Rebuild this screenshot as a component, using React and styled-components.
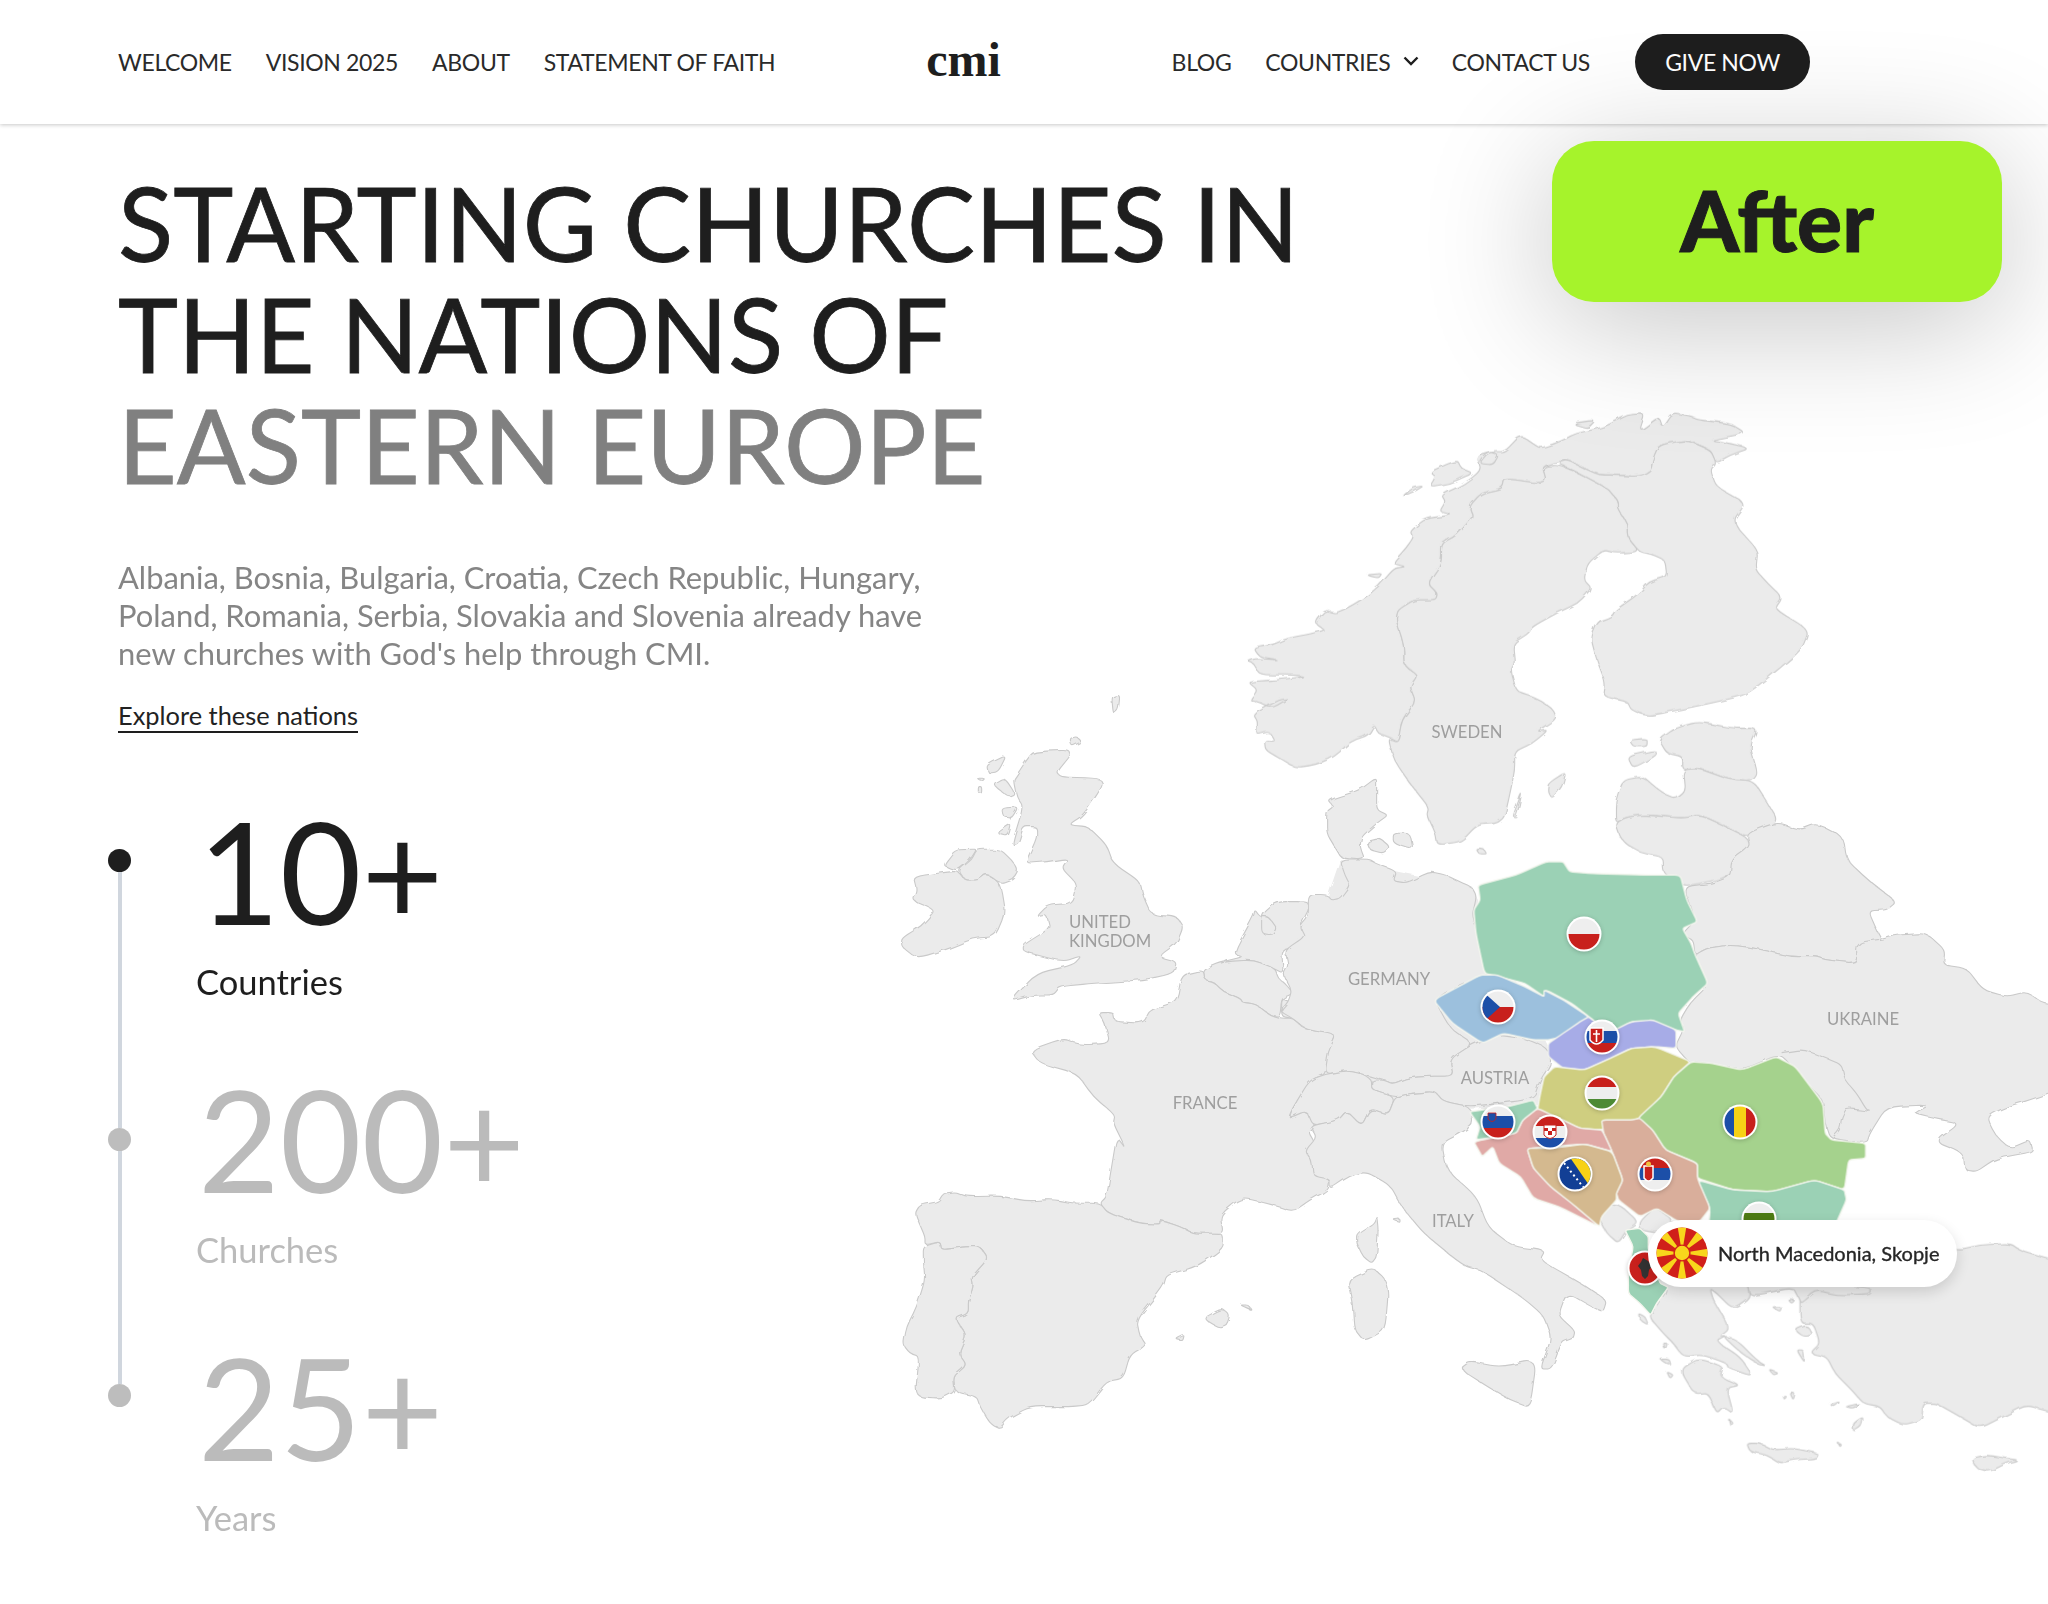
import styled, { createGlobalStyle } from 'styled-components';

const GlobalStyle = createGlobalStyle`
  html, body {
    margin: 0;
    background: #fff;
    font-family: Lato, "Open Sans", sans-serif;
    color: #1e1e1e;
  }
`;

const leftLinks = ['WELCOME', 'VISION 2025', 'ABOUT', 'STATEMENT OF FAITH'];
const stats = [
  { value: '10+', label: 'Countries', active: true },
  { value: '200+', label: 'Churches' },
  { value: '25+', label: 'Years' },
];

// Map pieces were traced region by region, each <g> has its own scale
const NORTH = 'translate(1220 400) scale(0.3954 0.3333)';
const WEST = 'translate(880 690) scale(0.3333)';
const IBERIA = 'translate(880 1090) scale(0.3333)';
const EAST = 'translate(1640 840) scale(0.3333)';
const SOUTH = 'translate(1560 1200) scale(0.3333)';
const BALKANS = 'translate(1380 840) scale(0.426 0.3333)';
const CENTRAL = 'translate(1250 860) scale(0.3333 0.3827)';

// rounds the corners of a traced polygon so coasts don't look cut with scissors
function smooth(d, r = 0.32) {
  const pts = d.match(/-?\d+(\.\d+)?,-?\d+(\.\d+)?/g).map((p) => p.split(',').map(Number));
  const closed = /Z\s*$/.test(d);
  const lerp = (a, b, t) => [a[0] + (b[0] - a[0]) * t, a[1] + (b[1] - a[1]) * t];
  const fmt = (p) => `${p[0].toFixed(1)},${p[1].toFixed(1)}`;
  const n = pts.length;
  let out = '';
  pts.forEach((v, i) => {
    const prev = pts[(i - 1 + n) % n];
    const next = pts[(i + 1) % n];
    if (!closed && i === 0) {
      out += `M${fmt(v)} `;
      return;
    }
    if (!closed && i === n - 1) {
      out += `L${fmt(v)} `;
      return;
    }
    const a = lerp(v, prev, r);
    const b = lerp(v, next, r);
    out += `${i === 0 ? 'M' : 'L'}${fmt(a)} Q${fmt(v)} ${fmt(b)} `;
  });
  return closed ? `${out}Z` : out;
}

const northLand = [
  'M390,975 L375,1005 L330,1025 L290,1070 L240,1095 L190,1103 L150,1075 L115,1050 L112,1020 L140,1025 L125,995 L92,1005 L95,965 L85,945 L110,925 L150,900 L175,895 L130,925 L90,905 L75,900 L95,870 L70,845 L140,840 L215,830 L190,825 L100,825 L85,790 L70,785 L90,775 L150,780 L100,770 L85,745 L130,735 L170,715 L235,700 L265,690 L240,670 L265,630 L290,640 L320,625 L370,590 L400,560 L440,505 L470,500 L435,490 L470,445 L490,410 L480,395 L520,355 L590,345 L555,335 L570,305 L560,285 L620,250 L660,210 L650,170 L690,155 L720,155 L760,105 L790,130 L810,145 L860,125 L900,100 L960,85 L990,70 L1030,45 L1075,40 L1060,95 L1110,50 L1120,85 L1145,40 L1190,50 L1210,60 L1290,70 L1330,100 L1240,120 L1270,125 L1340,145 L1290,165 L1255,190 L1240,150 L1180,120 L1110,135 L1095,175 L1090,210 L1060,230 L1000,225 L960,225 L920,205 L880,180 L855,185 L815,200 L825,240 L805,250 L720,235 L715,265 L660,280 L630,320 L640,350 L600,405 L560,430 L560,490 L525,550 L550,580 L545,600 L490,600 L450,630 L445,660 L465,735 L465,795 L500,825 L480,860 L495,905 L460,960 L450,1025 L425,1010 L400,1000 Z',
  'M425,1015 L450,1025 L460,960 L495,905 L480,860 L500,825 L465,795 L465,735 L445,660 L450,630 L490,600 L545,600 L550,580 L525,550 L560,490 L560,430 L600,405 L640,350 L630,320 L660,280 L715,265 L720,235 L805,250 L825,240 L815,200 L855,195 L900,215 L980,265 L1005,300 L1005,325 L1030,370 L1030,410 L1060,455 L1000,460 L970,450 L930,490 L920,540 L940,565 L905,610 L850,640 L790,680 L780,700 L740,730 L745,790 L735,810 L750,875 L800,895 L840,925 L852,955 L800,995 L830,990 L790,1030 L745,1055 L745,1110 L735,1170 L720,1250 L700,1270 L650,1275 L610,1325 L550,1335 L545,1300 L525,1250 L530,1225 L480,1150 L440,1080 Z',
  'M1060,455 L1030,410 L1030,370 L1005,325 L1005,300 L980,265 L900,215 L855,190 L880,180 L920,205 L960,225 L1000,225 L1060,230 L1090,210 L1095,175 L1110,135 L1180,120 L1240,150 L1255,190 L1240,210 L1255,260 L1330,310 L1295,365 L1360,450 L1355,510 L1385,550 L1420,590 L1400,625 L1490,690 L1470,750 L1400,820 L1330,885 L1240,910 L1140,935 L1080,948 L1040,930 L1030,905 L970,890 L975,850 L950,770 L938,715 L955,665 L990,650 L1000,630 L1060,580 L1085,545 L1130,530 L1125,480 L1090,462 Z',
  'M460,290 L490,262 L515,258 L490,275 Z',
  'M530,260 L545,230 L530,215 L600,180 L610,205 L640,220 L580,250 Z',
  'M890,70 L950,60 L930,85 Z',
  'M655,190 L680,155 L705,165 L690,195 Z',
  'M370,525 L410,520 L400,535 Z',
  'M830,1150 L875,1115 L865,1160 L840,1195 L828,1175 Z',
  'M740,1250 L765,1170 L750,1250 Z',
  'M645,1345 L665,1345 L675,1362 L655,1362 Z',
  'M1035,1020 L1080,1015 L1080,1040 L1045,1040 Z',
  'M1030,1070 L1100,1050 L1105,1065 L1045,1105 Z',
  'M1110,1020 L1150,985 L1210,965 L1300,985 L1360,985 L1340,1040 L1360,1120 L1345,1145 L1290,1140 L1210,1105 L1170,1110 L1170,1070 L1130,1060 Z',
  'M1000,1270 L1000,1200 L1020,1140 L1070,1130 L1120,1180 L1150,1195 L1175,1170 L1170,1110 L1210,1105 L1290,1140 L1350,1145 L1380,1200 L1410,1260 L1380,1290 L1330,1310 L1280,1280 L1215,1245 L1170,1255 L1080,1245 L1030,1250 Z',
  'M1000,1270 L1030,1250 L1080,1245 L1170,1255 L1215,1245 L1280,1280 L1330,1310 L1345,1345 L1290,1431 L1171,1461 L1121,1419 L1121,1371 L1062,1359 L1015,1320 Z',
];

const westLand = [
  'M440,510 L470,445 L470,410 L430,410 L415,460 L395,465 L430,350 L410,320 L400,270 L410,255 L440,210 L460,185 L585,180 L520,260 L660,265 L670,285 L610,375 L565,405 L625,410 L680,465 L700,520 L780,575 L790,620 L815,675 L890,680 L910,710 L890,760 L835,800 L890,815 L880,850 L790,870 L640,880 L540,890 L520,915 L460,915 L390,935 L470,850 L580,825 L605,797 L550,815 L430,785 L430,765 L510,715 L500,675 L470,680 L505,645 L575,640 L590,580 L545,535 L565,505 L500,515 L445,520 Z',
  'M320,225 L380,195 L355,245 L325,250 Z',
  'M340,285 L375,265 L405,310 L385,320 Z',
  'M365,355 L415,350 L395,385 L370,380 Z',
  'M350,430 L395,400 L385,440 Z',
  'M290,265 L315,265 L305,275 Z',
  'M295,290 L305,290 L305,310 L295,310 Z',
  'M570,145 L590,140 L605,155 L575,170 Z',
  'M695,20 L720,15 L715,60 L700,72 Z',
  'M100,560 L210,545 L235,545 L255,570 L295,570 L320,550 L360,580 L375,670 L345,740 L280,745 L210,775 L110,805 L65,770 L65,745 L120,710 L140,690 L165,660 L95,630 L110,600 Z',
  'M190,525 L225,480 L270,478 L290,478 L270,510 L235,540 L210,535 Z',
  'M235,540 L275,510 L290,478 L360,478 L395,510 L415,540 L400,565 L360,580 L320,550 L295,570 L255,570 Z',
  'M1490,262 L1440,300 L1345,330 L1360,350 L1340,365 L1340,430 L1370,480 L1385,505 L1455,510 L1440,470 L1445,440 L1490,400 L1525,375 L1490,360 L1490,300 Z',
  'M1460,455 L1500,445 L1530,470 L1510,490 L1470,480 Z',
  'M1540,430 L1590,430 L1600,480 L1540,460 Z',
  'M1125,660 L1120,680 L1060,790 L1090,800 L1030,815 L1060,825 L1120,810 L1180,835 L1210,850 L1205,780 L1260,770 L1280,720 L1260,710 L1290,650 L1280,635 L1190,635 L1145,675 L1145,730 L1175,735 L1190,715 L1165,680 L1140,680 Z',
  'M970,840 L1030,815 L1120,810 L1185,835 L1195,865 L1215,880 L1240,910 L1205,925 L1200,980 L1170,975 L1130,945 L1090,940 L1080,925 L1030,905 L1000,875 L975,870 Z',
  'M1205,925 L1240,940 L1250,960 L1240,985 L1205,980 Z',
  'M970,840 L975,870 L1000,875 L1030,905 L1080,925 L1090,940 L1130,945 L1170,975 L1205,985 L1240,985 L1270,1015 L1370,1030 L1350,1080 L1335,1155 L1300,1165 L1240,1250 L1225,1285 L1250,1260 L1285,1270 L1305,1305 L1285,1325 L1305,1360 L1280,1380 L1305,1410 L1295,1445 L1350,1470 L1345,1500 L1290,1530 L1240,1565 L1180,1545 L1085,1522 L1020,1575 L1030,1630 L985,1630 L940,1630 L900,1610 L840,1590 L840,1603 L780,1600 L685,1570 L660,1540 L680,1520 L695,1430 L710,1340 L740,1380 L700,1300 L705,1275 L640,1220 L590,1150 L480,1120 L450,1080 L550,1045 L600,1065 L690,1060 L675,1000 L655,968 L700,968 L705,995 L790,1000 L810,960 L890,935 L905,855 Z',
];

const iberiaLand = [
  'M660,340 L685,370 L780,400 L840,403 L840,390 L900,410 L940,430 L1030,430 L1030,475 L950,530 L860,555 L850,590 L770,690 L780,740 L800,765 L750,795 L730,865 L680,875 L625,945 L570,950 L450,950 L385,985 L360,1015 L330,1000 L300,950 L290,920 L225,905 L220,860 L260,825 L235,790 L260,735 L225,685 L265,670 L265,630 L280,590 L275,560 L325,505 L300,470 L260,470 L185,480 L180,455 L135,465 L135,440 L120,405 L105,370 L120,345 L175,335 L190,310 L225,305 L260,320 L360,318 L440,333 L520,328 L580,340 Z',
  'M130,470 L180,455 L185,480 L260,470 L300,470 L325,505 L275,560 L280,590 L265,630 L265,670 L225,685 L260,735 L235,790 L260,825 L220,860 L225,905 L185,925 L105,920 L118,800 L90,790 L70,765 L80,710 L110,650 L135,570 L130,510 Z',
  'M970,685 L1025,655 L1050,675 L1040,705 L1015,712 Z',
  'M1080,645 L1105,645 L1115,660 Z',
  'M885,745 L910,732 L905,750 Z',
  'M1430,430 L1480,400 L1490,375 L1495,420 L1490,500 L1475,520 L1450,500 L1430,460 Z',
  'M1405,570 L1480,535 L1515,565 L1525,610 L1515,720 L1470,745 L1450,750 L1425,720 L1420,640 Z',
];

const centralBase = 'M270,0 L665,70 L900,500 L870,640 L660,650 L160,700 L115,400 Z';

const centralLand = [
  'M270,0 L285,40 L300,65 L270,100 L245,105 L230,90 L175,90 L175,150 L150,175 L165,200 L105,235 L115,275 L100,300 L125,340 L115,370 L90,395 L130,415 L165,440 L260,455 L235,500 L225,560 L290,550 L340,560 L400,575 L430,585 L470,570 L530,565 L610,565 L600,520 L670,480 L600,440 L550,360 L695,305 L725,295 L720,260 L665,150 L680,95 L665,70 L625,55 L590,40 L540,30 L470,60 L430,55 L440,30 L380,10 L360,0 Z',
  'M225,560 L290,550 L340,560 L365,575 L365,600 L435,620 L415,665 L360,650 L335,695 L290,655 L265,680 L190,695 L170,655 L115,675 L140,630 L180,575 Z',
  'M610,565 L530,565 L470,570 L430,585 L400,575 L365,575 L365,600 L435,620 L480,610 L555,605 L580,630 L660,645 L850,625 L870,575 L905,530 L890,490 L820,465 L745,455 L670,480 L600,520 Z',
  'M180,695 L265,680 L290,655 L335,695 L360,650 L415,665 L435,620 L480,610 L555,605 L580,630 L660,645 L670,690 L640,710 L575,740 L590,810 L680,880 L715,960 L790,1010 L885,1020 L870,1045 L1000,1110 L1070,1150 L1060,1180 L1030,1170 L950,1130 L925,1190 L975,1230 L970,1250 L935,1260 L905,1330 L870,1330 L905,1250 L880,1190 L820,1145 L700,1075 L640,1060 L520,975 L450,900 L420,850 L350,815 L300,825 L240,860 L240,835 L190,825 L185,785 L165,760 L200,725 Z',
  'M630,1330 L660,1310 L750,1325 L860,1305 L840,1430 L780,1410 L720,1380 Z',
  'M430,940 L450,938 L450,948 Z',
];

const eastLand = [
  'M130,140 L215,130 L270,110 L275,60 L330,20 L320,-20 L411,-54 L480,-30 L530,-50 L610,-10 L620,60 L690,125 L770,185 L740,210 L685,212 L710,270 L725,298 L660,310 L650,370 L560,360 L530,350 L450,350 L350,325 L270,315 L200,325 L165,345 L160,300 L125,285 L165,240 Z',
  'M165,345 L200,325 L270,315 L350,325 L450,350 L530,350 L560,360 L650,370 L650,320 L665,305 L725,298 L770,285 L860,280 L915,330 L910,375 L980,385 L1030,450 L1100,470 L1160,455 L1210,490 L1320,500 L1320,720 L1224,760 L1170,780 L1100,800 L1040,830 L1070,890 L1110,925 L1170,900 L1180,935 L1100,950 L1060,960 L1010,995 L975,990 L970,940 L885,905 L960,850 L880,835 L820,820 L870,795 L740,800 L690,880 L680,910 L570,895 L555,850 L550,780 L480,710 L430,650 L400,650 L305,690 L170,665 L150,670 L105,620 L130,570 L120,540 L150,490 L205,435 L170,375 Z',
];

const moldovaBorder =
  'M425,638 L490,628 L560,655 L605,675 L615,720 L650,760 L680,810 L695,815 L620,805 L605,830 L600,870 L575,895';

const southLand = [
  'M720,370 L720,250 L900,100 L1190,150 L1260,135 L1350,130 L1380,150 L1464,175 L1580,200 L1580,660 L1464,635 L1400,615 L1330,650 L1260,685 L1200,650 L1130,610 L1090,610 L1085,660 L1030,675 L980,650 L960,620 L910,610 L870,565 L825,520 L800,470 L750,460 L780,430 L760,370 Z',
  'M285,260 L300,220 L560,240 L570,290 L530,320 L510,320 L470,280 L450,265 L460,300 L510,385 L480,410 L500,410 L470,425 L540,470 L580,530 L505,505 L500,490 L430,465 L370,470 L340,430 L315,405 L275,360 L270,345 L325,265 Z',
  'M560,245 L930,260 L930,282 L830,285 L770,270 L725,310 L720,300 L700,262 L570,290 Z',
  'M360,510 L415,475 L490,500 L480,530 L540,555 L500,565 L520,640 L490,620 L470,640 L445,580 L405,585 Z',
  'M490,410 L530,420 L590,480 L615,495 L590,490 L545,460 Z',
  'M560,730 L600,730 L640,750 L700,745 L775,760 L770,775 L700,780 L660,790 L620,765 L570,755 Z',
  'M1235,775 L1280,765 L1340,775 L1375,780 L1340,790 L1290,815 L1250,805 Z',
  'M705,390 L740,375 L760,405 L730,410 Z',
  'M710,450 L730,450 L735,490 Z',
  'M880,670 L910,650 L905,680 L880,695 Z',
  'M810,615 L840,605 L825,620 Z',
  'M855,620 L900,610 L880,625 Z',
  'M235,340 L255,350 L265,375 L240,360 Z',
  'M295,475 L325,475 L330,495 Z',
  'M320,515 L340,525 L330,535 Z',
  'M310,430 L322,430 L315,450 Z',
  'M690,580 L705,580 L700,600 Z',
  'M670,585 L680,590 L672,598 Z',
  'M635,320 L665,320 L660,335 Z',
  'M685,300 L705,300 L695,310 Z',
  'M505,655 L520,670 L510,675 Z',
  'M830,725 L845,735 L840,740 Z',
  'M630,510 L655,520 L640,525 Z',
  'M115,50 L135,10 L180,15 L235,65 L200,90 L175,130 L140,100 Z',
  'M240,65 L285,20 L340,60 L300,100 L240,90 Z',
  'M300,100 L340,60 L420,120 L300,230 Z',
];

const albania =
  'M195,90 L240,85 L265,110 L265,150 L300,250 L325,262 L290,310 L272,345 L240,310 L205,280 L205,210 L220,140 Z';

const nations = [
  { color: '#9bd1b5', d: 'M230,135 L320,105 L390,65 L430,65 L445,95 L490,100 L620,105 L705,105 L720,180 L745,245 L710,265 L730,310 L740,345 L770,430 L735,470 L700,520 L715,575 L695,570 L640,545 L590,545 L540,580 L490,530 L450,490 L390,450 L385,470 L340,430 L280,410 L245,400 L225,280 L220,210 L235,180 Z' },
  { color: '#9cc0dd', d: 'M125,480 L235,405 L275,405 L340,440 L385,470 L385,450 L430,480 L490,530 L470,550 L430,590 L395,600 L360,600 L290,580 L240,610 L170,550 Z' },
  { color: '#a7ace7', d: 'M395,610 L430,580 L470,545 L490,530 L535,580 L590,545 L640,540 L695,570 L695,625 L645,620 L590,625 L540,655 L480,690 L430,685 L395,650 Z' },
  { color: '#cfce80', d: 'M410,680 L480,690 L540,655 L590,625 L645,620 L730,665 L690,710 L660,770 L610,835 L520,870 L470,865 L420,835 L370,810 L375,770 L385,710 Z' },
  { color: '#a5d28d', d: 'M730,665 L780,670 L850,690 L930,650 L975,680 L1040,790 L1045,880 L1060,900 L1140,910 L1140,955 L1100,960 L1090,1050 L1020,1020 L920,1055 L830,1050 L745,1015 L745,970 L670,930 L640,870 L605,835 L660,770 L690,710 Z' },
  { color: '#9bd1b5', d: 'M745,1020 L830,1050 L920,1055 L1020,1020 L1090,1050 L1095,1080 L1060,1180 L770,1180 L775,1105 Z' },
  { color: '#d9ae9b', d: 'M520,840 L590,840 L610,835 L640,870 L670,930 L745,970 L745,1015 L775,1105 L750,1145 L700,1145 L650,1105 L610,1130 L560,1080 L555,1060 L570,1020 L545,935 L525,880 Z' },
  { color: '#e0a9a6', d: 'M220,905 L320,880 L335,840 L370,805 L420,835 L470,865 L520,870 L525,880 L545,935 L480,912 L345,925 L360,985 L420,1050 L515,1160 L420,1100 L360,1075 L330,1010 L280,970 L265,920 L240,950 Z' },
  { color: '#d4b98f', d: 'M345,925 L400,925 L480,912 L545,935 L570,1020 L555,1060 L555,1080 L520,1130 L515,1160 L450,1090 L400,1040 L360,985 Z' },
  { color: '#9bd1b5', d: 'M210,815 L240,810 L300,800 L360,780 L370,805 L335,840 L320,880 L225,900 L235,860 Z' },
];

const labels = [
  { x: 1467, y: 738, text: 'SWEDEN' },
  { x: 1069, y: 928, text: 'UNITED', $start: true },
  { x: 1069, y: 947, text: 'KINGDOM', $start: true },
  { x: 1389, y: 985, text: 'GERMANY' },
  { x: 1205, y: 1109, text: 'FRANCE' },
  { x: 1495, y: 1084, text: 'AUSTRIA' },
  { x: 1453, y: 1227, text: 'ITALY' },
  { x: 1863, y: 1025, text: 'UKRAINE' },
];

const RED = '#c8201c';
const BLUE = '#1c4fa8';
const WHITE = '#eeeeee';

function StripeRows({ colors }) {
  const h = 36 / colors.length;
  return colors.map((c, i) => (
    <rect key={c + i} x="-18" y={-18 + i * h} width="36" height={h} fill={c} />
  ));
}

function FlagArt({ name }) {
  if (name === 'poland') return <StripeRows colors={[WHITE, RED]} />;
  if (name === 'hungary') return <StripeRows colors={[RED, WHITE, '#4d8a34']} />;
  if (name === 'bulgaria') return <StripeRows colors={[WHITE, '#4d7a14', RED]} />;
  if (name === 'slovenia') {
    return (
      <>
        <StripeRows colors={[WHITE, BLUE, RED]} />
        <path d="M-10,-9 H-2 V-3 Q-6,2 -10,-3 Z" fill={BLUE} stroke={RED} strokeWidth="0.8" />
      </>
    );
  }
  if (name === 'romania') {
    return (
      <>
        <rect x="-18" y="-18" width="12" height="36" fill={BLUE} />
        <rect x="-6" y="-18" width="12" height="36" fill="#f7d116" />
        <rect x="6" y="-18" width="12" height="36" fill={RED} />
      </>
    );
  }
  if (name === 'czech') {
    return (
      <>
        <StripeRows colors={[WHITE, RED]} />
        <path d="M-18,-18 L2,0 L-18,18 Z" fill="#1c4fa8" />
      </>
    );
  }
  if (name === 'slovakia') {
    return (
      <>
        <StripeRows colors={[WHITE, BLUE, RED]} />
        <path d="M-12,-9 H1 V3 Q-5.5,11 -12,3 Z" fill={RED} stroke="#fff" strokeWidth="1.5" />
        <path d="M-5.5,-7 V5 M-9,-3 H-2" stroke="#fff" strokeWidth="1.6" />
      </>
    );
  }
  if (name === 'croatia') {
    return (
      <>
        <StripeRows colors={[RED, WHITE, BLUE]} />
        <path d="M-6,-7 H6 V3 Q0,10 -6,3 Z" fill="#fff" stroke={RED} strokeWidth="1" />
        <path d="M-6,-4 H-2 V-1 H2 V-4 H6 V-1 H2 V3 H-2 V-1 H-6 Z" fill={RED} />
      </>
    );
  }
  if (name === 'serbia') {
    return (
      <>
        <StripeRows colors={[RED, BLUE, WHITE]} />
        <path d="M-11,-8 H-2 V4 Q-6.5,10 -11,4 Z" fill={RED} stroke="#fff" strokeWidth="1.5" />
        <circle cx="-6.5" cy="-10" r="2.5" fill="#f0c040" />
      </>
    );
  }
  if (name === 'bosnia') {
    return (
      <>
        <rect x="-18" y="-18" width="36" height="36" fill="#123f95" />
        <path d="M-6,-18 L16,-18 L16,14 Z" fill="#f7d116" />
        <path d="M-11,-11 L9,14" stroke="#fff" strokeWidth="2" strokeDasharray="2 3" />
      </>
    );
  }
  // albania
  return (
    <>
      <rect x="-18" y="-18" width="36" height="36" fill={RED} />
      <path d="M-2,-10 L3,-7 L7,-2 L4,2 L3,8 L0,11 L-3,8 L-4,2 L-7,-2 L-4,-6 Z" fill="#333" />
    </>
  );
}

const flags = [
  { name: 'poland', x: 1584, y: 934 },
  { name: 'czech', x: 1498, y: 1007 },
  { name: 'slovakia', x: 1602, y: 1037 },
  { name: 'hungary', x: 1602, y: 1093 },
  { name: 'romania', x: 1740, y: 1122 },
  { name: 'slovenia', x: 1498, y: 1122 },
  { name: 'croatia', x: 1550, y: 1132 },
  { name: 'bosnia', x: 1575, y: 1174 },
  { name: 'serbia', x: 1655, y: 1174 },
  { name: 'bulgaria', x: 1759, y: 1219 },
  { name: 'albania', x: 1645, y: 1268 },
];

function MapFlag({ name, x, y }) {
  return (
    <g transform={`translate(${x} ${y})`}>
      <FlagRing r="17.5" />
      <clipPath id={`flag-${name}`}>
        <circle r="15.5" />
      </clipPath>
      <g clipPath={`url(#flag-${name})`}>
        <FlagArt name={name} />
      </g>
    </g>
  );
}

function Shapes({ transform, paths }) {
  return (
    <g transform={transform}>
      {paths.map((d) => (
        <Land key={d} d={smooth(d)} />
      ))}
    </g>
  );
}

function EuropeMap() {
  return (
    <MapSvg viewBox="880 400 1168 1100">
      <filter id="coast" x="-2%" y="-2%" width="104%" height="104%">
        <feTurbulence type="fractalNoise" baseFrequency="0.09" numOctaves="2" seed="4" />
        <feDisplacementMap in="SourceGraphic" scale="4.5" />
      </filter>
      <g filter="url(#coast)">
        <g transform={CENTRAL}>
          <path d={centralBase} fill="#ebebeb" />
        </g>
        <Shapes transform={NORTH} paths={northLand} />
        <Shapes transform={WEST} paths={westLand} />
        <Shapes transform={IBERIA} paths={iberiaLand} />
        <Shapes transform={CENTRAL} paths={centralLand} />
        <Shapes transform={EAST} paths={eastLand} />
        <g transform={EAST}>
          <Border d={smooth(moldovaBorder)} />
        </g>
        <Shapes transform={SOUTH} paths={southLand} />
      </g>
      <g transform={BALKANS}>
        {nations.map((n) => (
          <Nation key={n.d} d={smooth(n.d, 0.16)} $color={n.color} />
        ))}
      </g>
      <g transform={SOUTH}>
        <Nation d={smooth(albania, 0.16)} $color="#9bd1b5" />
      </g>
      {labels.map((l) => (
        <MapLabel key={l.text} x={l.x} y={l.y} $start={l.$start}>
          {l.text}
        </MapLabel>
      ))}
      {flags.map((f) => (
        <MapFlag key={f.name} {...f} />
      ))}
    </MapSvg>
  );
}

function MacedoniaFlag() {
  const rays = [0, 45, 90, 135, 180, 225, 270, 315];
  return (
    <svg width="52" height="52" viewBox="-26 -26 52 52">
      <clipPath id="mk-flag">
        <circle r="25.5" />
      </clipPath>
      <g clipPath="url(#mk-flag)">
        <rect x="-26" y="-26" width="52" height="52" fill="#d0201a" />
        {rays.map((a) => (
          <path
            key={a}
            d="M0,0 L27,-4.5 L27,4.5 Z"
            fill="#f8d61c"
            transform={`rotate(${a})`}
          />
        ))}
        <circle r="8.6" fill="#d0201a" />
        <circle r="7.2" fill="#f8d61c" />
      </g>
    </svg>
  );
}

export default function App() {
  return (
    <Page>
      <GlobalStyle />
      <Header>
        <NavGroup>
          {leftLinks.map((link) => (
            <NavLink key={link}>{link}</NavLink>
          ))}
        </NavGroup>
        <Logo>cmi</Logo>
        <RightNav>
          <NavLink>BLOG</NavLink>
          <CountriesLink>
            COUNTRIES
            <svg width="16" height="10" viewBox="0 0 16 10">
              <path d="M1.5 1.5 L8 8 L14.5 1.5" fill="none" stroke="#1e1e1e" strokeWidth="2.4" />
            </svg>
          </CountriesLink>
          <NavLink>CONTACT US</NavLink>
          <GiveButton>GIVE NOW</GiveButton>
        </RightNav>
      </Header>

      <Badge>After</Badge>

      <Hero>
        <EuropeMap />
        <Tooltip>
          <MacedoniaFlag />
          North Macedonia, Skopje
        </Tooltip>

        <Title>
          STARTING CHURCHES IN
          <br />
          THE NATIONS OF
          <br />
          <TitleMuted>EASTERN EUROPE</TitleMuted>
        </Title>
        <Intro>
          Albania, Bosnia, Bulgaria, Croatia, Czech Republic, Hungary,
          <br />
          Poland, Romania, Serbia, Slovakia and Slovenia already have
          <br />
          new churches with God's help through CMI.
        </Intro>
        <Explore>Explore these nations</Explore>

        <Timeline>
          <Rail>
            <Dot $active />
            <Segment $height={256} />
            <Dot />
            <Segment $height={233} />
            <Dot />
          </Rail>
          <StatList>
            {stats.map((s) => (
              <Stat key={s.label} $active={s.active}>
                <StatValue>{s.value}</StatValue>
                <StatLabel>{s.label}</StatLabel>
              </Stat>
            ))}
          </StatList>
        </Timeline>
      </Hero>
    </Page>
  );
}

const Page = styled.div`
  position: relative;
  width: 2048px;
  height: 1604px;
  overflow: hidden;
  background: #fff;
`;

const Header = styled.header`
  position: relative;
  z-index: 2;
  display: flex;
  align-items: center;
  height: 124px;
  padding: 0 238px 0 118px;
  background: #fff;
  box-shadow: 0 1px 4px rgba(0, 0, 0, 0.22);
`;

const NavGroup = styled.nav`
  display: flex;
  align-items: center;
  gap: 34px;
`;

const NavLink = styled.a`
  font-size: 23px;
  line-height: 28px;
  letter-spacing: -0.35px;
  color: #2a2a2a;
  white-space: nowrap;
`;

const CountriesLink = styled(NavLink)`
  display: flex;
  align-items: center;
  gap: 13px;
  margin-right: -1.5px;
  svg {
    margin-top: -3px;
  }
`;

const Logo = styled.div`
  margin-left: 151px;
  margin-top: -4px;
  font-family: 'Liberation Serif', serif;
  font-weight: 700;
  font-size: 48px;
  line-height: 50px;
  color: #1e1e1e;
`;

const RightNav = styled(NavGroup)`
  margin-left: auto;
`;

const GiveButton = styled.a`
  display: flex;
  align-items: center;
  justify-content: center;
  width: 175px;
  height: 56px;
  margin-left: 11px;
  border-radius: 28px;
  background: #1e1e1e;
  color: #fff;
  font-size: 23px;
  letter-spacing: -0.35px;
`;

const Badge = styled.div`
  position: absolute;
  z-index: 3;
  top: 141px;
  left: 1552px;
  display: flex;
  align-items: center;
  justify-content: center;
  width: 450px;
  height: 161px;
  box-sizing: border-box;
  padding-bottom: 4px;
  border-radius: 42px;
  background: #a6f32b;
  color: #1e1e1e;
  font-weight: 900;
  font-size: 84px;
  -webkit-text-stroke: 1px #1e1e1e;
  box-shadow: 0 20px 130px rgba(0, 0, 0, 0.24);
`;

const Hero = styled.main`
  position: relative;
  padding: 44px 118px 0;
`;

const MapSvg = styled.svg`
  position: absolute;
  top: 276px;
  left: 880px;
  width: 1168px;
  height: 1100px;
`;

const Land = styled.path`
  fill: #ebebeb;
  stroke: #c9c9c9;
  stroke-width: 1.1px;
  stroke-linejoin: round;
  vector-effect: non-scaling-stroke;
`;

const Border = styled(Land)`
  fill: none;
`;

const Nation = styled.path`
  fill: ${({ $color }) => $color};
  stroke: #f4f6ee;
  stroke-width: 1.4px;
  stroke-linejoin: round;
  vector-effect: non-scaling-stroke;
`;

const MapLabel = styled.text`
  font-family: Lato, sans-serif;
  font-size: 16.7px;
  fill: #9e9e9e;
  text-anchor: ${({ $start }) => ($start ? 'start' : 'middle')};
`;

const FlagRing = styled.circle`
  fill: #fff;
  filter: drop-shadow(0 1px 2px rgba(0, 0, 0, 0.2));
`;

const Tooltip = styled.div`
  position: absolute;
  top: 1096px;
  left: 1648px;
  display: flex;
  align-items: center;
  gap: 10px;
  width: 309px;
  height: 67px;
  box-sizing: border-box;
  padding-left: 8px;
  padding-bottom: 1px;
  border-radius: 33px;
  background: #fff;
  box-shadow: 0 5px 14px rgba(0, 0, 0, 0.14);
  font-size: 20px;
  -webkit-text-stroke: 0.35px #262626;
  color: #262626;
  white-space: nowrap;
`;

const Title = styled.h1`
  position: relative;
  margin: 0;
  font-weight: 400;
  font-size: 101.8px;
  line-height: 111px;
  -webkit-text-stroke: 0.8px currentColor;
  color: #1e1e1e;
`;

const TitleMuted = styled.span`
  color: #808080;
`;

const Intro = styled.p`
  position: relative;
  margin: 58px 0 0;
  font-size: 30.9px;
  line-height: 38px;
  color: #858585;
`;

const Explore = styled.a`
  position: relative;
  display: inline-block;
  margin-top: 26px;
  border-bottom: 2px solid #1e1e1e;
  font-size: 25.4px;
  line-height: 32px;
  color: #222;
`;

const Timeline = styled.section`
  position: relative;
  display: flex;
  margin-top: 53px;
  margin-left: -10px;
`;

const Rail = styled.div`
  display: flex;
  flex-direction: column;
  align-items: center;
  width: 23px;
  padding-top: 63px;
`;

const Dot = styled.span`
  flex: none;
  width: 23px;
  height: 23px;
  border-radius: 50%;
  background: ${({ $active }) => ($active ? '#1e1e1e' : '#bdbdbd')};
`;

const Segment = styled.span`
  flex: none;
  width: 4px;
  height: ${({ $height }) => $height}px;
  background: #d0d6de;
`;

const StatList = styled.div`
  display: flex;
  flex-direction: column;
  gap: 46px;
  margin-left: 65px;
`;

const Stat = styled.div`
  color: ${({ $active }) => ($active ? '#1e1e1e' : '#bbbbbb')};
`;

const StatValue = styled.div`
  font-size: 141px;
  line-height: 169px;
  margin-left: 2px;
`;

const StatLabel = styled.div`
  font-size: 34.5px;
  line-height: 53px;
`;
